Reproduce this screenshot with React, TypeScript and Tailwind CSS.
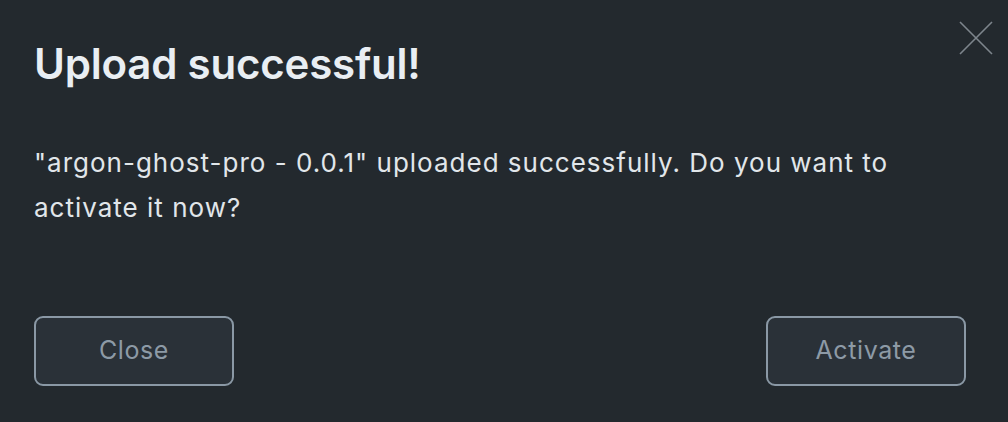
export default function App() {
  return (
    <div
      className="relative w-[1008px] h-[422px] bg-[#23292e] overflow-hidden"
      style={{ fontFamily: "Inter, 'Noto Sans', sans-serif" }}
    >
      <button className="absolute top-[21px] right-[15px] w-[34px] h-[34px] flex items-center justify-center">
        <svg width="34" height="34" viewBox="0 0 34 34" fill="none">
          <path d="M1 1L33 33M33 1L1 33" stroke="#7d858c" strokeWidth="1.6" />
        </svg>
      </button>

      <div className="flex flex-col h-full pl-[34px] pr-[42px]">
        <h1 className="mt-[38px] text-[42px] leading-[52px] font-semibold text-[#e9eef3] tracking-[-0.2px]">
          Upload successful!
        </h1>
        <p className="mt-[50px] text-[26px] leading-[45px] text-[#e1e6ea] tracking-[1px]">
          "argon-ghost-pro - 0.0.1" uploaded successfully. Do you want to
          <br />
          activate it now?
        </p>
        <div className="mt-auto mb-[36px] flex justify-between">
          <button className="w-[200px] h-[70px] rounded-[9px] border-2 border-[#8a98a5] bg-[#2a3138] text-[25px] tracking-[0.6px] text-[#8d9aa6]">
            Close
          </button>
          <button className="w-[200px] h-[70px] rounded-[9px] border-2 border-[#8a98a5] bg-[#2a3138] text-[25px] tracking-[0.6px] text-[#8d9aa6]">
            Activate
          </button>
        </div>
      </div>
    </div>
  );
}
